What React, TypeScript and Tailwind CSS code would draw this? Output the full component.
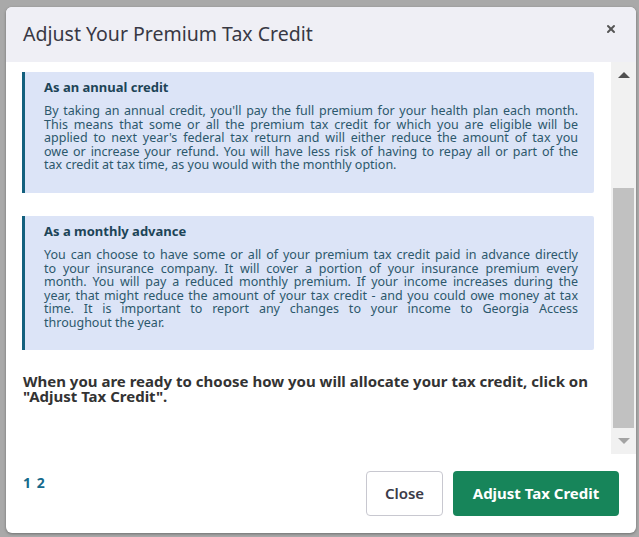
import { X } from 'lucide-react';

const annualLines = [
  "By taking an annual credit, you'll pay the full premium for your health plan each month.",
  "This means that some or all the premium tax credit for which you are eligible will be",
  "applied to next year's federal tax return and will either reduce the amount of tax you",
  'owe or increase your refund. You will have less risk of having to repay all or part of the',
  'tax credit at tax time, as you would with the monthly option.',
];

const monthlyLines = [
  'You can choose to have some or all of your premium tax credit paid in advance directly',
  'to your insurance company. It will cover a portion of your insurance premium every',
  'month. You will pay a reduced monthly premium. If your income increases during the',
  'year, that might reduce the amount of your tax credit - and you could owe money at tax',
  'time. It is important to report any changes to your income to Georgia Access',
  'throughout the year.',
];

const InfoBox = ({ title, lines, height }: { title: string; lines: string[]; height: string }) => (
  <div className={`bg-[#dce4f7] border-l-[3px] border-[#13607e] rounded-r-[2px] pl-[19px] pr-[16px] pt-[7px] ${height}`}>
    <h3 className="text-[13px] font-bold text-[#1d4457] leading-[16px]">{title}</h3>
    <p className="mt-[9px] text-[12.5px] leading-[13.5px] text-[#2c586c]">
      {lines.map((line, i) => (
        <span
          key={i}
          className={
            i < lines.length - 1
              ? 'block whitespace-nowrap text-justify [text-align-last:justify]'
              : 'block whitespace-nowrap'
          }
        >
          {line}
        </span>
      ))}
    </p>
  </div>
);

const Scrollbar = () => (
  <div className="w-[25px] bg-[#f1f1f1] flex flex-col items-center">
    <div className="h-[26px] flex items-center justify-center">
      <div className="w-0 h-0 border-l-[6px] border-r-[6px] border-b-[6px] border-l-transparent border-r-transparent border-b-[#505050]" />
    </div>
    <div className="flex-1 w-full px-[2px]">
      <div className="mt-[100px] h-[240px] bg-[#c1c1c1]" />
    </div>
    <div className="h-[26px] flex items-center justify-center">
      <div className="w-0 h-0 border-l-[6px] border-r-[6px] border-t-[6px] border-l-transparent border-r-transparent border-t-[#a3a3a3]" />
    </div>
  </div>
);

export default function App() {
  return (
    <div className="w-[639px] h-[537px] bg-[#a9a9a9] pt-[7px] pl-[6px] font-['Noto_Sans',sans-serif] overflow-hidden">
      <div className="w-[630px] h-[526px] bg-white rounded-[6px] overflow-hidden flex flex-col shadow-[0_1px_3px_rgba(0,0,0,0.35)]">
        <div className="h-[55px] bg-[#efeff5] flex items-center justify-between pl-[17px] pr-[19px] shrink-0">
          <h2 className="text-[19.5px] text-[#383844] leading-none pb-[2px]">Adjust Your Premium Tax Credit</h2>
          <X className="w-[12px] h-[12px] text-[#555] mb-[11px]" strokeWidth={4} />
        </div>

        <div className="h-[392px] flex shrink-0">
          <div className="flex-1 overflow-hidden pt-[10px] pl-[16px] pr-[17px]">
            <InfoBox title="As an annual credit" lines={annualLines} height="h-[121px]" />
            <div className="h-[23px]" />
            <InfoBox title="As a monthly advance" lines={monthlyLines} height="h-[134px]" />
            <p className="mt-[24px] pl-[1px] text-[15px] font-bold leading-[14.5px] text-[#333]">
              When you are ready to choose how you will allocate your tax credit, click on
              <br />
              "Adjust Tax Credit".
            </p>
          </div>
          <Scrollbar />
        </div>

        <div className="flex-1 flex items-start justify-between pl-[17px] pr-[17px] pt-[17px]">
          <div className="text-[14px] font-bold text-[#166a8c] tracking-[1px] pt-[1px]">1 2</div>
          <div className="flex gap-[10px]">
            <button className="w-[77px] h-[45px] rounded-[4px] border border-[#c8c8d0] bg-white text-[15px] font-semibold text-[#3b3b48]">
              Close
            </button>
            <button className="w-[166px] h-[45px] rounded-[4px] bg-[#17855a] text-[15px] font-bold text-white">
              Adjust Tax Credit
            </button>
          </div>
        </div>
      </div>
    </div>
  );
}
